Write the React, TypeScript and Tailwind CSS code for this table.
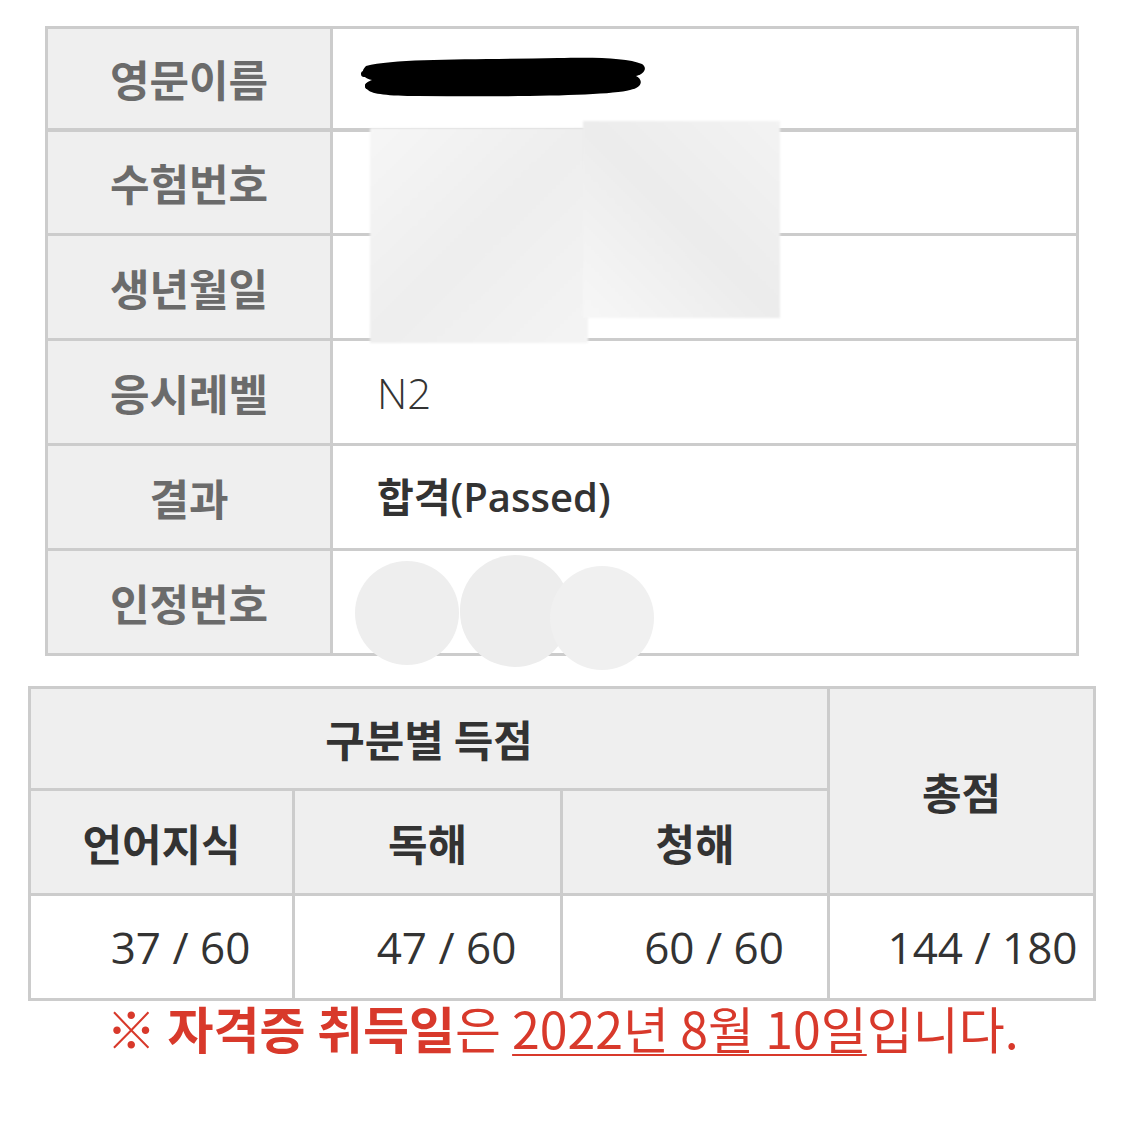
const labelRows = [
  { label: '영문이름', value: '', h: 'h-[99px]', border: '' },
  { label: '수험번호', value: '', h: 'h-[105px]', border: 'border-t-[4px]' },
  { label: '생년월일', value: '', h: 'h-[105px]', border: 'border-t-[3px]' },
  { label: '응시레벨', value: 'N2', h: 'h-[105px]', border: 'border-t-[3px]' },
  { label: '결과', value: '합격(Passed)', h: 'h-[105px]', border: 'border-t-[3px]' },
  { label: '인정번호', value: '', h: 'h-[105px]', border: 'border-t-[3px]' },
];

const scores = ['37 / 60', '47 / 60', '60 / 60'];

function Scribble() {
  // black marker over the english name
  return (
    <svg width="290" height="50" viewBox="0 0 290 50" className="absolute left-[358px] top-[52px]">
      <path d="M8 14 C40 6 120 8 200 6 C240 5 270 6 284 12 C290 16 286 22 278 24 C286 28 284 36 272 38 C250 44 150 45 60 44 C30 44 14 42 10 38 C4 34 8 30 14 28 C4 26 2 20 8 14 Z" fill="#000" />
      <path d="M6 22 C60 18 200 18 280 20" stroke="#000" strokeWidth="6" strokeLinecap="round" fill="none" />
      <path d="M10 34 C80 30 200 31 276 30" stroke="#000" strokeWidth="6" strokeLinecap="round" fill="none" />
    </svg>
  );
}

export default function App() {
  return (
    <div className="w-[1125px] h-[1125px] bg-white font-['Open_Sans','Noto_Sans_CJK_KR',sans-serif] relative overflow-hidden">
      <div className="pt-[26px] pl-[45px]">
        {/* 기본 정보 */}
        <div className="w-[1034px] border-[3px] border-[#cccccc]">
          {labelRows.map((row) => (
            <div key={row.label} className={`flex border-[#cccccc] ${row.h} ${row.border}`}>
              <div className="w-[285px] shrink-0 bg-[#efefef] border-r-[3px] border-[#cccccc] flex items-center justify-center text-[43px] font-bold text-[#6b6b6b] font-['Noto_Sans_CJK_KR',sans-serif]">
                {row.label}
              </div>
              <div
                className={`flex-1 flex items-center pl-[44px] text-[#333333] ${
                  row.value === 'N2' ? 'font-light text-[42px]' : 'font-semibold text-[40px]'
                }`}
              >
                {row.value}
              </div>
            </div>
          ))}
        </div>
      </div>

      {/* 구분별 득점 */}
      <div className="mt-[30px] ml-[28px] w-[1068px] border-[3px] border-[#cccccc] flex">
        <div className="w-[796px] flex flex-col">
          <div className="h-[102px] bg-[#efefef] border-b-[3px] border-[#cccccc] flex items-center justify-center text-[43px] font-bold text-[#333333] font-['Noto_Sans_CJK_KR',sans-serif]">
            구분별 득점
          </div>
          <div className="h-[105px] flex border-b-[3px] border-[#cccccc] bg-[#efefef] text-[43px] font-bold text-[#333333] font-['Noto_Sans_CJK_KR',sans-serif]">
            <div className="w-[261px] flex items-center justify-center">언어지식</div>
            <div className="w-[268px] border-l-[3px] border-[#cccccc] flex items-center justify-center">독해</div>
            <div className="w-[267px] border-l-[3px] border-[#cccccc] flex items-center justify-center">청해</div>
          </div>
          <div className="h-[102px] flex text-[44px] text-[#333333]">
            {scores.map((s, i) => (
              <div
                key={i}
                className={`${i === 0 ? 'w-[261px]' : i === 1 ? 'w-[268px] border-l-[3px]' : 'w-[267px] border-l-[3px]'} border-[#cccccc] flex items-center justify-center pl-[38px]`}
              >
                {s}
              </div>
            ))}
          </div>
        </div>
        <div className="flex-1 border-l-[3px] border-[#cccccc] flex flex-col">
          <div className="h-[207px] bg-[#efefef] border-b-[3px] border-[#cccccc] flex items-center justify-center text-[43px] font-bold text-[#333333] font-['Noto_Sans_CJK_KR',sans-serif]">
            총점
          </div>
          <div className="h-[102px] flex items-center justify-center pl-[42px] text-[44px] text-[#333333]">
            144 / 180
          </div>
        </div>
      </div>

      <p className="-mt-[4px] text-center text-[50px] leading-[60px] text-[#d8392b] font-['Noto_Sans_CJK_KR',sans-serif]">
        ※ <span className="font-bold">자격증 취득일</span>은{' '}
        <span className="underline decoration-2 underline-offset-[5px]">2022년 8월 10일</span>입니다.
      </p>

      {/* 가림 처리 */}
      <Scribble />
      <div className="absolute left-[370px] top-[128px] w-[218px] h-[215px] bg-gradient-to-br from-[#f6f6f6] via-[#eeeeee] to-[#f4f4f4] blur-[1px]" />
      <div className="absolute left-[583px] top-[121px] w-[197px] h-[197px] bg-gradient-to-bl from-[#f3f3f3] via-[#ececec] to-[#f7f7f7] blur-[1px]" />
      <div className="absolute left-[355px] top-[561px] w-[104px] h-[104px] rounded-full bg-[#eeeeee]" />
      <div className="absolute left-[460px] top-[555px] w-[110px] h-[112px] rounded-full bg-[#ededed]" />
      <div className="absolute left-[550px] top-[566px] w-[104px] h-[104px] rounded-full bg-[#f0f0f0]" />
    </div>
  );
}
